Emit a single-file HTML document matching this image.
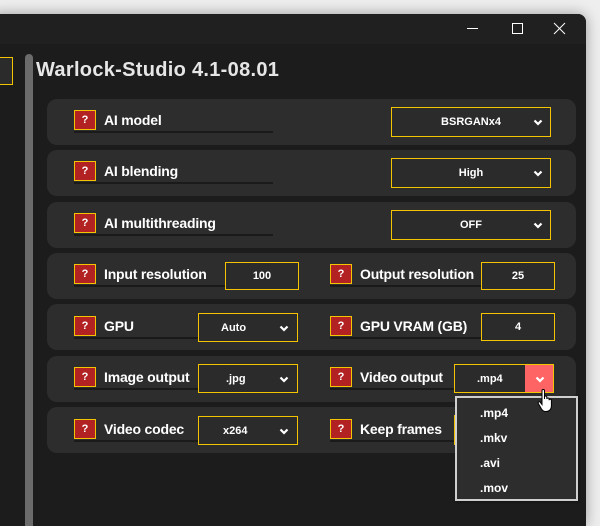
<!DOCTYPE html>
<html><head><meta charset="utf-8"><style>
*{margin:0;padding:0;box-sizing:border-box}
html,body{width:600px;height:526px;overflow:hidden}
body{background:#eeeeee;font-family:"Liberation Sans",sans-serif;position:relative}
.win{position:absolute;left:-10px;top:14px;width:596px;height:512px;background:#1c1c1c;border-radius:8px 8px 0 0;box-shadow:0 0 14px rgba(0,0,0,.35);overflow:hidden}
.tb{position:absolute;left:0;top:0;width:100%;height:30px;background:#202020}
.a{position:absolute}
.card{position:absolute;left:47px;width:529px;height:46px;background:#2d2d2d;border-radius:10px}
.q{position:absolute;width:22px;height:20px;background:#b22222;border:1px solid #f5c400;color:#fff;font-weight:bold;font-size:11px;text-align:center;line-height:18px}
.lbl{position:absolute;color:#fff;font-weight:bold;font-size:14px;white-space:nowrap;letter-spacing:-0.2px}
.ul{position:absolute;height:2px;background:#1a1a1a}
.box{position:absolute;border:1.5px solid #f5c400;background:#2b2b2b;color:#fff;font-weight:bold;font-size:11px;display:flex;align-items:center;justify-content:center}
.chev{position:absolute;top:50%;margin-top:-3px;width:10px;height:7px}
</style></head><body>
<div class="win">
<div class="tb"></div>
</div>
<svg class="a" style="left:400px;top:18px" width="180" height="22">
<line x1="67" y1="10.5" x2="78" y2="10.5" stroke="#fff" stroke-width="1"/>
<rect x="112.5" y="5.5" width="10" height="10" fill="none" stroke="#fff" stroke-width="1"/>
<line x1="154" y1="5" x2="165" y2="16" stroke="#fff" stroke-width="1"/>
<line x1="165" y1="5" x2="154" y2="16" stroke="#fff" stroke-width="1"/>
</svg>
<div class="a" style="left:-2px;top:57px;width:15px;height:28px;border:1.5px solid #f5c400;background:#2b2b2b"></div>
<div class="a" style="left:25px;top:54px;width:8px;height:472px;background:#6b6b6b;border-radius:4px 4px 0 0"></div>
<div class="a" style="left:36px;top:59px;color:#e6e6e6;font-weight:bold;font-size:20px;letter-spacing:0.3px">Warlock-Studio 4.1-08.01</div>

<div class="card" style="top:99px"></div>
<div class="card" style="top:150px"></div>
<div class="card" style="top:202px"></div>
<div class="card" style="top:253px"></div>
<div class="card" style="top:304px"></div>
<div class="card" style="top:356px"></div>
<div class="card" style="top:407px"></div>

<div class="ul" style="left:74px;top:131px;width:199px"></div>
<div class="q" style="left:74px;top:110px">?</div>
<div class="lbl" style="left:104px;top:112px">AI model</div>
<div class="box" style="left:391px;top:107px;width:160px;height:30px">BSRGANx4<svg class="chev" style="right:7px" viewBox="0 0 10 7"><path d="M1.5 1.5l3.5 3.5 3.5-3.5" stroke="#fff" stroke-width="2.2" fill="none"/></svg></div>
<div class="ul" style="left:74px;top:182px;width:199px"></div>
<div class="q" style="left:74px;top:161px">?</div>
<div class="lbl" style="left:104px;top:163px">AI blending</div>
<div class="box" style="left:391px;top:158px;width:160px;height:30px">High<svg class="chev" style="right:7px" viewBox="0 0 10 7"><path d="M1.5 1.5l3.5 3.5 3.5-3.5" stroke="#fff" stroke-width="2.2" fill="none"/></svg></div>
<div class="ul" style="left:74px;top:234px;width:199px"></div>
<div class="q" style="left:74px;top:213px">?</div>
<div class="lbl" style="left:104px;top:215px">AI multithreading</div>
<div class="box" style="left:391px;top:210px;width:160px;height:30px">OFF<svg class="chev" style="right:7px" viewBox="0 0 10 7"><path d="M1.5 1.5l3.5 3.5 3.5-3.5" stroke="#fff" stroke-width="2.2" fill="none"/></svg></div>
<div class="ul" style="left:74px;top:285px;width:152px"></div>
<div class="q" style="left:74px;top:264px">?</div>
<div class="lbl" style="left:104px;top:266px">Input resolution</div>
<div class="box" style="left:225px;top:262px;width:74px;height:28px">100</div>
<div class="ul" style="left:330px;top:285px;width:152px"></div>
<div class="q" style="left:330px;top:264px">?</div>
<div class="lbl" style="left:360px;top:266px">Output resolution</div>
<div class="box" style="left:481px;top:262px;width:74px;height:28px">25</div>
<div class="ul" style="left:74px;top:337px;width:125px"></div>
<div class="q" style="left:74px;top:316px">?</div>
<div class="lbl" style="left:104px;top:318px">GPU</div>
<div class="box" style="left:198px;top:313px;width:100px;height:29px;justify-content:flex-start;padding-left:22px">Auto<svg class="chev" style="right:8px" viewBox="0 0 10 7"><path d="M1.5 1.5l3.5 3.5 3.5-3.5" stroke="#fff" stroke-width="2.2" fill="none"/></svg></div>
<div class="ul" style="left:330px;top:337px;width:152px"></div>
<div class="q" style="left:330px;top:316px">?</div>
<div class="lbl" style="left:360px;top:318px">GPU VRAM (GB)</div>
<div class="box" style="left:481px;top:313px;width:74px;height:28px">4</div>
<div class="ul" style="left:74px;top:388px;width:125px"></div>
<div class="q" style="left:74px;top:367px">?</div>
<div class="lbl" style="left:104px;top:369px">Image output</div>
<div class="box" style="left:198px;top:364px;width:100px;height:29px;justify-content:flex-start;padding-left:27px">.jpg<svg class="chev" style="right:8px" viewBox="0 0 10 7"><path d="M1.5 1.5l3.5 3.5 3.5-3.5" stroke="#fff" stroke-width="2.2" fill="none"/></svg></div>
<div class="ul" style="left:330px;top:388px;width:125px"></div>
<div class="q" style="left:330px;top:367px">?</div>
<div class="lbl" style="left:360px;top:369px">Video output</div>
<div class="box" style="left:454px;top:364px;width:100px;height:29px;justify-content:flex-start;padding-left:22px">.mp4<div class="a" style="right:0;top:0;width:28px;height:100%;background:#ff6464"></div><svg class="chev" style="right:8px" viewBox="0 0 10 7"><path d="M1.5 1.5l3.5 3.5 3.5-3.5" stroke="#fff" stroke-width="2.2" fill="none"/></svg></div>
<div class="ul" style="left:74px;top:440px;width:125px"></div>
<div class="q" style="left:74px;top:419px">?</div>
<div class="lbl" style="left:104px;top:421px">Video codec</div>
<div class="box" style="left:198px;top:416px;width:100px;height:29px;justify-content:flex-start;padding-left:24px">x264<svg class="chev" style="right:8px" viewBox="0 0 10 7"><path d="M1.5 1.5l3.5 3.5 3.5-3.5" stroke="#fff" stroke-width="2.2" fill="none"/></svg></div>
<div class="ul" style="left:330px;top:440px;width:125px"></div>
<div class="q" style="left:330px;top:419px">?</div>
<div class="lbl" style="left:360px;top:421px">Keep frames</div>
<div class="a" style="left:454px;top:415px;width:10px;height:30px;border-left:2px solid #f5c400"></div>
<div class="a" style="left:455px;top:396px;width:123px;height:105px;background:#2d2d2d;border:2px solid #cfcfcf;box-shadow:1px 1px 2px rgba(0,0,0,.4);color:#fff;font-weight:bold;font-size:12px">
<div class="a" style="left:23px;top:8px">.mp4</div>
<div class="a" style="left:23px;top:33px">.mkv</div>
<div class="a" style="left:23px;top:58px">.avi</div>
<div class="a" style="left:23px;top:83px">.mov</div>
</div>
<svg class="a" style="left:537px;top:388px" width="22" height="26" viewBox="0 0 22 26">
<path d="M5 2.5c0-1.4 2.5-1.4 2.5 0V11l0-2c0-1.3 2.3-1.3 2.3 0v2c0-1.3 2.3-1.3 2.3 0v1.2c0-1.2 2.3-1.2 2.3 0V18c0 3-2 5.5-5 5.5H8.5c-2 0-3-1-4-2.5L1.3 15.5c-.7-1.3 1-2.3 2-1.2L5 16.5z" fill="#fff" stroke="#000" stroke-width="1"/>
</svg>
</body></html>
